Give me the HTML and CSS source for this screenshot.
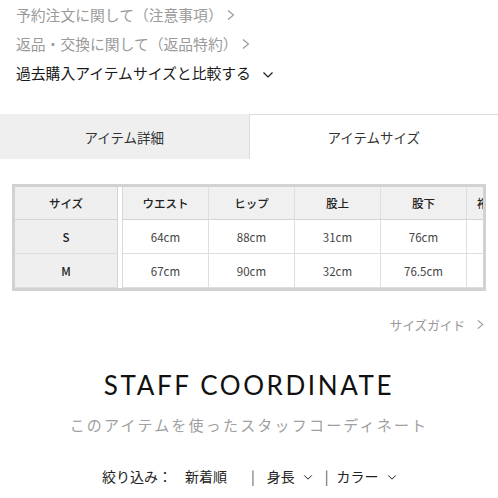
FILE: index.html
```html
<!DOCTYPE html>
<html lang="ja">
<head>
<meta charset="utf-8">
<link rel="stylesheet" href="styles.css">
</head>
<body>
<div class="links">
  <div class="link muted">予約注文に関して（注意事項）<svg class="chev-r" viewBox="0 0 10 12"><path d="M2 1.5 L7.5 6 L2 10.5" /></svg></div>
  <div class="link muted">返品・交換に関して（返品特約）<svg class="chev-r" viewBox="0 0 10 12"><path d="M2 1.5 L7.5 6 L2 10.5" /></svg></div>
  <div class="link dark">過去購入アイテムサイズと比較する<svg class="chev-d" viewBox="0 0 12 8"><path d="M1.5 1.5 L6 6 L10.5 1.5" /></svg></div>
</div>

<div class="tabs">
  <div class="tab off">アイテム詳細</div>
  <div class="tab on">アイテムサイズ</div>
</div>

<div class="sizewrap">
  <div class="sizegrid">
    <div class="c first head">サイズ</div><div class="gap"></div>
    <div class="c head">ウエスト</div><div class="c head">ヒップ</div><div class="c head">股上</div><div class="c head">股下</div><div class="c head last">裄丈</div>
    <div class="c first rowh">S</div><div class="gap"></div>
    <div class="c">64cm</div><div class="c">88cm</div><div class="c">31cm</div><div class="c">76cm</div><div class="c last"></div>
    <div class="c first rowh">M</div><div class="gap"></div>
    <div class="c">67cm</div><div class="c">90cm</div><div class="c">32cm</div><div class="c">76.5cm</div><div class="c last"></div>
  </div>
</div>

<div class="guide">サイズガイド<svg class="chev-r g" viewBox="0 0 10 12"><path d="M2 1.5 L7.5 6 L2 10.5" /></svg></div>

<h2 class="title">STAFF COORDINATE</h2>
<div class="subtitle">このアイテムを使ったスタッフコーディネート</div>

<div class="filter">
  <span class="lbl">絞り込み：</span>
  <span class="opt">新着順</span>
  <span class="sep">|</span>
  <span class="opt">身長<svg class="chev-d s" viewBox="0 0 12 8"><path d="M1.5 1.5 L6 6 L10.5 1.5" /></svg></span>
  <span class="sep2">|</span>
  <span class="opt">カラー<svg class="chev-d s" viewBox="0 0 12 8"><path d="M1.5 1.5 L6 6 L10.5 1.5" /></svg></span>
</div>
</body>
</html>
```
FILE: styles.css
```css
* { box-sizing: border-box; }
html, body { margin: 0; padding: 0; background: #fff; }
body {
  font-family: "Noto Sans CJK JP", "Noto Sans", sans-serif;
  color: #222;
  width: 498px;
  overflow: hidden;
}
.links { padding-left: 16px; }
.link {
  height: 29px;
  line-height: 29px;
  font-size: 14.8px;
  display: flex;
  align-items: center;
  white-space: nowrap;
}
.muted { color: #9a9a9a; }
.dark { color: #1a1a1a; }
svg path { fill: none; stroke: currentColor; stroke-width: 1.2; }
.chev-r { width: 10px; height: 12px; margin-left: 3px; }
.chev-d { width: 12px; height: 8px; margin-left: 11px; margin-top: 4px; }
.tabs {
  margin-top: 27px;
  display: flex;
  height: 45px;
}
.tab {
  flex: 1;
  display: flex;
  align-items: center;
  justify-content: center;
  font-size: 13.5px;
  color: #333;
}
.tab.off { background: #efefef; }
.tab.on { border-top: 1px solid #dcdcdc; border-left: 1px solid #dcdcdc; }
.sizewrap {
  margin: 25px 0 0 12px;
  width: 474px;
  height: 107px;
  border: 3px solid #d2d2d2;
  overflow: hidden;
}
.sizegrid {
  display: grid;
  grid-template-columns: 103px 5px 86px 86px 86px 86px 86px;
  grid-template-rows: 33px 34px 34px;
  width: 538px;
}
.c {
  display: flex;
  align-items: center;
  justify-content: center;
  font-size: 11.5px;
  color: #444;
  border-right: 1px solid #dedede;
  border-bottom: 1px solid #dedede;
  white-space: nowrap;
}
.c.head { background: #f0f0f0; color: #222; font-weight: 500; border-bottom: 1px solid #d4d4d4; }
.c.first { background: #efefef; border-right: 1px solid #d4d4d4; }
.c.rowh { font-weight: 500; color: #222; }
.c.first.head { background: #efefef; }
.c.last { justify-content: flex-start; padding-left: 10px; }
.gap { background: #fff; border-right: 1px solid #d8d8d8; }
.guide {
  margin-top: 23px;
  height: 20px;
  display: flex;
  justify-content: flex-end;
  align-items: center;
  padding-right: 13px;
  font-size: 12.6px;
  color: #999;
}
.guide .chev-r { margin-left: 11px; width: 9px; height: 11px; }
.title {
  margin: 34px 0 0 0;
  height: 34px;
  line-height: 34px;
  text-align: center;
  font-family: Lato, "Noto Sans", sans-serif;
  font-weight: normal;
  font-size: 26px;
  letter-spacing: 2.6px;
  color: #111;
}
.subtitle {
  margin-top: 12px;
  height: 22px;
  line-height: 22px;
  text-align: center;
  font-size: 15px;
  letter-spacing: 2.2px;
  color: #a0a0a0;
}
.filter {
  margin-top: 29px;
  height: 22px;
  display: flex;
  align-items: center;
  padding-left: 102px;
  font-size: 14px;
  color: #222;
  white-space: nowrap;
}
.filter .opt { display: inline-flex; align-items: center; }
.filter .lbl { width: 83px; }
.filter .sep { margin: 0 12px 0 24px; color: #555; }
.filter .sep2 { margin: 0 8px 0 12px; color: #555; }
.chev-d.s { width: 10px; height: 7px; margin-left: 8px; margin-top: 2px; }
```
